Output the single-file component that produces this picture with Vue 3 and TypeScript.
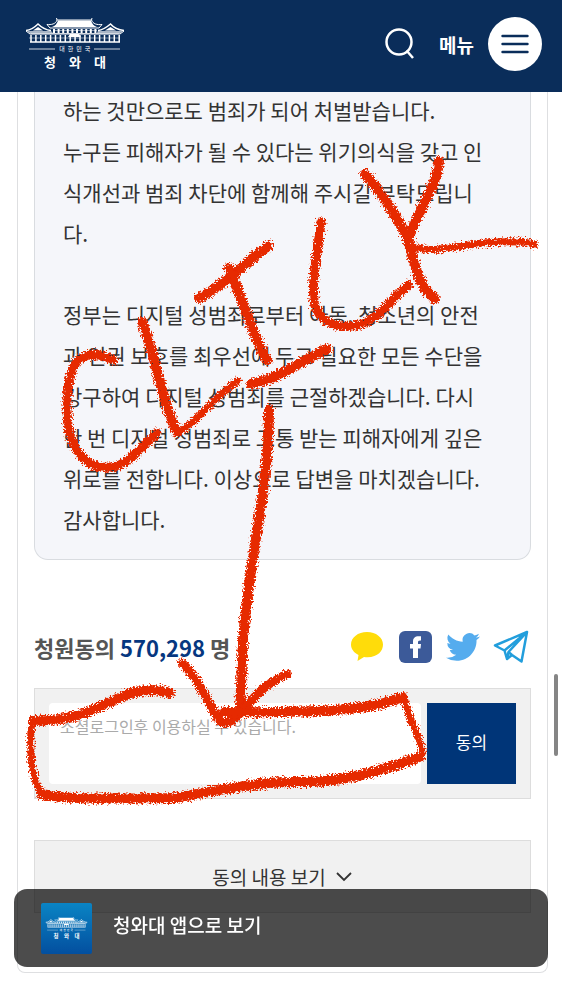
<script setup lang="ts">
import { ref } from 'vue'

interface Stroke {
  d: string
  w: number
}

const count = ref<number>(570298)
const opinion = ref<string>('')

const intro: string[] = [
  '하는 것만으로도 범죄가 되어 처벌받습니다.',
  '누구든 피해자가 될 수 있다는 위기의식을 갖고 인',
  '식개선과 범죄 차단에 함께해 주시길 부탁드립니',
  '다.',
]
const closing: string[] = [
  '정부는 디지털 성범죄로부터 아동, 청소년의 안전',
  '과 인권 보호를 최우선에 두고 필요한 모든 수단을',
  '강구하여 디지털 성범죄를 근절하겠습니다. 다시',
  '한 번 디지털 성범죄로 고통 받는 피해자에게 깊은',
  '위로를 전합니다. 이상으로 답변을 마치겠습니다.',
  '감사합니다.',
]

const columns: number[] = Array.from({ length: 19 }, (_, i) => 31 + i * 4.9)
const upperColumns: number[] = Array.from({ length: 10 }, (_, i) => 54 + i * 4.6)

const strokes: Stroke[] = [
  { d: 'M113 360C98 352 83 353 76 363C66 378 66 406 68 425C71 446 84 465 100 467C124 470 133 456 157 433', w: 9 },
  { d: 'M142 322C155 352 161 400 177 432', w: 10 },
  { d: 'M178 432C192 428 212 398 238 381', w: 7 },
  { d: 'M199 298C220 288 243 265 268 246', w: 10 },
  { d: 'M229 268C243 300 252 334 267 360', w: 10 },
  { d: 'M251 384C278 379 298 363 327 349', w: 10 },
  { d: 'M321 222C318 250 310 285 315 306C324 330 354 331 373 318C387 309 395 294 409 285', w: 9 },
  { d: 'M365 174C382 193 403 225 410 246C415 268 420 289 435 299', w: 10 },
  { d: 'M439 161C438 185 416 213 408 240', w: 10 },
  { d: 'M407 243C424 257 466 244 484 243C505 241 520 241 535 244', w: 7 },
  { d: 'M269 410C269 480 252 548 246 610C241 646 242 680 240 708', w: 10 },
  { d: 'M182 663C200 680 208 704 219 720C233 732 245 703 263 689C272 681 279 678 287 674', w: 9 },
  { d: 'M170 693C133 681 112 707 72 717C58 720 46 720 33 721', w: 10 },
  { d: 'M32 720C29 743 31 781 42 794', w: 7 },
  { d: 'M42 794C72 801 132 798 175 798C218 790 260 782 291 782C329 783 361 778 420 757', w: 10 },
  { d: 'M421 757C426 743 411 731 404 697', w: 7 },
  { d: 'M403 697C371 710 320 713 224 712', w: 10 },
]
</script>

<template>
  <svg class="defs" aria-hidden="true">
    <symbol id="house-mark" viewBox="24 17 102 56" overflow="visible">
      <g fill="none" stroke="currentColor" stroke-width="1">
        <path d="M56.500 19L57 21H91.500L92 19M57 21C56 25 51 26 47 25.500L50 29H99L102 25.500C97 26 93 25 91.500 21" />
        <path d="M26 31.500C32 31 35 28 38 25C42 29 46 31 51 31.500M98 31.500C103 31 107 28 110.500 25C114 29 118 31 124 31.500" stroke-width="1.500" />
        <path d="M26 32L30 35H120L124 32" />
        <path d="M29 39H120M53 31.500H97" stroke-width=".5" />
        <path d="M30 43H120" stroke-width="1.500" />
        <path d="M29 50H55M94 50H120" stroke-width=".8" />
        <path v-for="x in columns" :key="x" :d="`M${x} 36V43`" stroke-width="1.500" />
        <path v-for="x in upperColumns" :key="x" :d="`M${x} 30V34`" stroke-width="2" />
      </g>
      <g fill="currentColor">
        <path d="M58 21.500H91C92 25 94 27 97 28H52C55 27 57 25 58 21.500Z" />
        <path d="M33 31.500L38 28L43 31.500ZM105 31.500L110.500 28L116 31.500Z" />
        <path d="M27 32H51L53 34H97L98 32H123L119 35H31Z" opacity=".65" />
        <path d="M70 35H79L81 38H68Z" />
      </g>
      <g class="mark-text" fill="currentColor" text-anchor="middle">
        <g font-size="6">
          <text x="62" y="52">대</text>
          <text x="70.500" y="52">한</text>
          <text x="79" y="52">민</text>
          <text x="87.500" y="52">국</text>
        </g>
        <g font-size="13" font-weight="700">
          <text x="50" y="68">청</text>
          <text x="75" y="68">와</text>
          <text x="100" y="68">대</text>
        </g>
      </g>
    </symbol>
  </svg>

  <header class="top">
    <a class="brand" href="#" aria-label="대한민국 청와대">
      <svg><use href="#house-mark" /></svg>
    </a>
    <button class="search" type="button" aria-label="검색">
      <svg viewBox="0 0 32 34" fill="none" stroke="#fff" stroke-width="2.500">
        <circle cx="15" cy="15" r="12.500" />
        <path d="M22.500 23.500L29 31" />
      </svg>
    </button>
    <button class="menu" type="button">
      <span>메뉴</span>
      <span class="disc">
        <svg viewBox="0 0 28 20" stroke="#0a2d5a" stroke-width="2.400" stroke-linecap="round">
          <path d="M1.500 2H26.500M1.500 10H26.500M1.500 18H26.500" />
        </svg>
      </span>
    </button>
  </header>

  <main class="page">
    <div class="sheet">
      <article class="answer">
        <p><template v-for="(line, i) in intro" :key="i">{{ line }}<br></template></p>
        <p><template v-for="(line, i) in closing" :key="i">{{ line }}<br></template></p>
      </article>

      <div class="summary">
        <h2>청원동의 <em>{{ count.toLocaleString('en-US') }}</em> 명</h2>
        <nav class="share" aria-label="공유">
          <a href="#" aria-label="카카오톡">
            <svg viewBox="0 0 36 34"><path d="M18 2C9 2 2 7.500 2 14.500C2 19 5 22.800 9.500 25L8.500 31L15 27C28 28.500 34 21.500 34 14.500C34 7.500 27 2 18 2Z" fill="#ffdc0a" /></svg>
          </a>
          <a href="#" aria-label="페이스북">
            <svg viewBox="0 0 36 34">
              <rect x="2" y="1" width="33" height="32" rx="6" fill="#3c5a99" />
              <path d="M16 28V18.500H13V14H16V11.500C16 7.500 18.500 5.500 24 6.300V10.500C21.500 10.200 21 11 21 12.500V14H24L23.500 18.500H21V28Z" fill="#fff" />
            </svg>
          </a>
          <a href="#" aria-label="트위터">
            <svg viewBox="0 0 24 24"><path d="M23.950 4.570a10 10 0 0 1-2.820.77 4.960 4.960 0 0 0 2.160-2.720c-.95.55-2 .95-3.130 1.180a4.920 4.920 0 0 0-8.380 4.480C7.690 8.100 4.070 6.130 1.640 3.160a4.920 4.920 0 0 0 1.520 6.570 4.900 4.900 0 0 1-2.230-.61v.06a4.920 4.920 0 0 0 3.950 4.830 5 5 0 0 1-2.210.08 4.940 4.940 0 0 0 4.600 3.420A9.870 9.870 0 0 1 0 19.540a13.990 13.990 0 0 0 7.550 2.210c9.050 0 14-7.500 14-13.980 0-.21 0-.42-.02-.63a9.940 9.940 0 0 0 2.460-2.550z" fill="#55acee" /></svg>
          </a>
          <a href="#" aria-label="텔레그램">
            <svg viewBox="0 0 36 34" fill="none" stroke="#229edc" stroke-width="2.500" stroke-linejoin="round"><path d="M34 2L2 15.500L11.500 20.500L14 29L19 25L28.500 31.500ZM34 2L11.500 20.500M34 2L15.500 22L14 29M15.500 22L19 25" /></svg>
          </a>
        </nav>
      </div>

      <form class="agree" @submit.prevent>
        <textarea v-model="opinion" aria-label="동의 의견" placeholder="소셜로그인후 이용하실 수 있습니다."></textarea>
        <button type="submit">동의</button>
      </form>

      <button class="more" type="button">
        동의 내용 보기
        <svg viewBox="0 0 18 12" fill="none" stroke="#333" stroke-width="1.800"><path d="M2 2L9 9L16 2" /></svg>
      </button>
    </div>
  </main>

  <a class="app-banner" href="#">
    <span class="app-icon"><svg><use href="#house-mark" /></svg></span>
    <span>청와대 앱으로 보기</span>
  </a>

  <div class="thumb"></div>

  <svg class="crayon" viewBox="0 0 562 981" aria-hidden="true">
    <defs>
      <filter id="grain" filterUnits="userSpaceOnUse" x="0" y="0" width="562" height="981">
        <feTurbulence type="fractalNoise" baseFrequency=".6" numOctaves="2" seed="4" />
        <feDisplacementMap in="SourceGraphic" scale="9" xChannelSelector="R" yChannelSelector="G" />
      </filter>
    </defs>
    <g fill="none" stroke="#e62904" stroke-linecap="round" stroke-linejoin="round" filter="url(#grain)">
      <path v-for="s in strokes" :key="s.d" :d="s.d" :stroke-width="s.w" />
    </g>
  </svg>
</template>

<style>
body {
  margin: 0;
  background: #fff;
  color: #333;
  font-family: "Noto Sans CJK KR", "Noto Sans", sans-serif;
}
</style>

<style scoped>
* {
  box-sizing: border-box;
}
button,
textarea {
  margin: 0;
  border: 0;
  font: inherit;
}
svg {
  display: block;
  overflow: visible;
}
.defs {
  position: absolute;
  width: 0;
  height: 0;
}
.mark-text {
  font-family: "Noto Sans CJK KR", sans-serif;
}
.top {
  position: fixed;
  z-index: 2;
  top: 0;
  left: 0;
  right: 0;
  height: 92px;
  padding: 0 20px 4px 24px;
  display: flex;
  align-items: center;
  background: #0a2d5a;
  color: #fff;
}
.brand {
  margin-right: auto;
  color: #fff;
}
.brand svg {
  width: 102px;
  height: 56px;
}
.search {
  padding: 0;
  margin-right: 23px;
  background: none;
}
.search svg {
  width: 32px;
  height: 34px;
}
.menu {
  display: flex;
  align-items: center;
  gap: 14px;
  padding: 0;
  background: none;
  color: #fff;
  font-size: 19px;
  font-weight: 700;
}
.disc {
  display: grid;
  place-items: center;
  width: 54px;
  height: 54px;
  border-radius: 50%;
  background: #fff;
}
.disc svg {
  width: 28px;
  height: 20px;
}
.page {
  padding: 90px 14px 9px 17px;
}
.sheet {
  padding: 0 16px 59px;
  border: 1px solid #dedfe1;
  border-top: 0;
  border-radius: 0 0 8px 8px;
}
.answer {
  display: grid;
  gap: 40px;
  padding: 0 28px 19px;
  border: 1px solid #d9dce0;
  border-top: 0;
  border-radius: 0 0 14px 14px;
  background: #f5f6fa;
  font-size: 21px;
  line-height: 41px;
  white-space: nowrap;
}
.answer p {
  margin: 0;
}
.summary {
  display: flex;
  align-items: center;
  justify-content: space-between;
  height: 40px;
  margin: 67px 0 21px;
  padding-right: 2px;
}
h2 {
  margin: 0;
  color: #555;
  font-size: 22px;
  font-weight: 700;
}
h2 em {
  color: #063780;
  font-style: normal;
}
.share {
  display: flex;
  gap: 12px;
}
.share svg {
  width: 36px;
  height: 34px;
}
.agree {
  display: flex;
  gap: 6px;
  padding: 14px;
  border: 1px solid #ddd;
  background: #f1f1f1;
}
.agree textarea {
  flex: 1;
  height: 81px;
  padding: 11px;
  border-radius: 4px;
  background: #fff;
  font-size: 16px;
  line-height: 24px;
  resize: none;
}
.agree textarea::placeholder {
  color: #aaa;
}
.agree button {
  width: 89px;
  padding: 0 0 4px;
  background: #003578;
  color: #fff;
  font-size: 17px;
}
.more {
  display: flex;
  align-items: center;
  justify-content: center;
  gap: 9px;
  width: 100%;
  height: 73px;
  margin-top: 41px;
  border: 1px solid #ddd;
  background: #f1f1f1;
  color: #333;
  font-size: 19px;
}
.more svg {
  width: 18px;
  height: 12px;
}
.app-banner {
  position: fixed;
  z-index: 2;
  left: 14px;
  right: 14px;
  bottom: 14px;
  height: 78px;
  display: flex;
  align-items: center;
  gap: 21px;
  padding: 0 27px;
  border-radius: 13px;
  background: rgba(0, 0, 0, 0.7);
  color: #fff;
  font-size: 19px;
  line-height: 28px;
  font-weight: 500;
  text-decoration: none;
}
.app-banner > span:last-child {
  padding-bottom: 6px;
}
.app-icon {
  display: grid;
  place-items: center;
  width: 51px;
  height: 51px;
  border-radius: 2px;
  background: linear-gradient(#0a84c4, #034f9f);
}
.app-icon svg {
  width: 43px;
  height: 24px;
}
.thumb {
  position: fixed;
  right: 4px;
  top: 674px;
  width: 4px;
  height: 82px;
  border-radius: 2px;
  background: #858585;
}
.crayon {
  position: absolute;
  z-index: 3;
  top: 0;
  left: 0;
  width: 100%;
  pointer-events: none;
}
</style>
